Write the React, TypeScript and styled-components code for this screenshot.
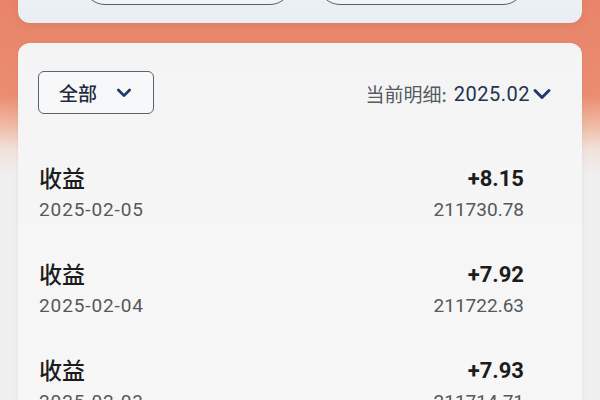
import React from "react";
import styled, { createGlobalStyle } from "styled-components";

const GlobalStyle = createGlobalStyle`
  html, body {
    margin: 0;
    padding: 0;
  }

  body {
    font-family: Roboto, "Noto Sans CJK SC", "Noto Sans", sans-serif;
    background: linear-gradient(
      to bottom,
      #e8846a 0px,
      #ea8c70 95px,
      #f0b9a3 125px,
      #f1e2db 150px,
      #efefef 175px,
      #efefef 100%
    );
    min-height: 100vh;
  }
`;

type Entry = {
  date: string;
  amount: string;
  balance: string;
};

const entries: Entry[] = [
  { date: "2025-02-05", amount: "+8.15", balance: "211730.78" },
  { date: "2025-02-04", amount: "+7.92", balance: "211722.63" },
  { date: "2025-02-03", amount: "+7.93", balance: "211714.71" },
];

const Chevron: React.FC<{ size: number; weight: number }> = ({ size, weight }) => (
  <svg width={size} height={size * 0.6} viewBox="0 0 20 12" fill="none">
    <path
      d="M3 2.5 L10 9.5 L17 2.5"
      stroke="#1f3a68"
      strokeWidth={weight}
      strokeLinecap="round"
      strokeLinejoin="round"
    />
  </svg>
);

export default function App() {
  return (
    <>
      <GlobalStyle />
      <Page>
        <TopCard>
          <PillButton />
          <PillButton />
        </TopCard>

        <DetailCard>
          <Header>
            <FilterButton>
              <span>全部</span>
              <Chevron size={16} weight={3.4} />
            </FilterButton>
            <MonthPicker>
              <MonthLabel>当前明细:</MonthLabel>
              <MonthValue>2025.02</MonthValue>
              <Chevron size={20} weight={3} />
            </MonthPicker>
          </Header>

          <List>
            {entries.map((entry) => (
              <Row key={entry.date}>
                <MainLine>
                  <Title>收益</Title>
                  <Amount>{entry.amount}</Amount>
                </MainLine>
                <SubLine>
                  <DateText>{entry.date}</DateText>
                  <Balance>{entry.balance}</Balance>
                </SubLine>
              </Row>
            ))}
          </List>
        </DetailCard>
      </Page>
    </>
  );
}

const Page = styled.div`
  display: flex;
  flex-direction: column;
  gap: 20px;
  margin-top: -55px;
  padding: 0 18px;
`;

const TopCard = styled.div`
  display: grid;
  grid-template-columns: 209px 207px;
  column-gap: 26px;
  padding: 16px 57px 18px 65px;
  border-radius: 12px;
  background: linear-gradient(to bottom, #f3f5f8, #e9eef4);
  box-shadow: 0 2px 6px rgba(160, 80, 50, 0.15);
`;

const PillButton = styled.div`
  height: 44px;
  box-sizing: border-box;
  border: 1.5px solid #59606a;
  border-radius: 22px;
  background: #f2f4f7;
`;

const DetailCard = styled.div`
  border-radius: 12px;
  background: linear-gradient(to bottom, #f4f4f4, #f6f6f6 200px, #f7f7f7);
  box-shadow: 0 1px 4px rgba(120, 120, 120, 0.12);
  padding-top: 28px;
  min-height: 420px;
`;

const Header = styled.div`
  display: flex;
  align-items: center;
  justify-content: space-between;
  padding: 0 30px 0 20px;
`;

const FilterButton = styled.div`
  display: flex;
  align-items: center;
  gap: 19px;
  box-sizing: border-box;
  width: 116px;
  height: 43px;
  padding: 0 18px 0 20px;
  border: 1.5px solid #5b6270;
  border-radius: 6px;
  background: #f7f8fa;
  font-family: "Noto Sans CJK SC", sans-serif;
  font-size: 19px;
  font-weight: 500;
  color: #1f2a3c;
  white-space: nowrap;

  & > svg {
    flex-shrink: 0;
  }
`;

const MonthPicker = styled.div`
  display: flex;
  align-items: center;
  gap: 2px;
  margin-top: 2px;
`;

const MonthLabel = styled.span`
  font-family: "Noto Sans CJK SC", sans-serif;
  font-size: 19px;
  color: #555a60;
  margin-right: 5px;
`;

const MonthValue = styled.span`
  font-size: 20px;
  letter-spacing: 0.5px;
  color: #22334f;
`;

const List = styled.div`
  display: flex;
  flex-direction: column;
  margin-top: 30px;
`;

const Row = styled.div`
  display: flex;
  flex-direction: column;
  gap: 4px;
  padding: 18px 58px 18px 21px;
`;

const MainLine = styled.div`
  display: flex;
  align-items: center;
  justify-content: space-between;
  height: 30px;
`;

const SubLine = styled.div`
  display: flex;
  align-items: center;
  justify-content: space-between;
  height: 26px;
  font-size: 19px;
  color: #55585c;
`;

const Title = styled.span`
  font-family: "Noto Sans CJK SC", sans-serif;
  font-size: 23px;
  font-weight: 500;
  color: #1c1c1c;
`;

const Amount = styled.span`
  font-size: 22px;
  font-weight: 700;
  color: #1c1c1c;
  margin-top: 3px;
`;

const DateText = styled.span`
  letter-spacing: 0.9px;
`;

const Balance = styled.span``;
